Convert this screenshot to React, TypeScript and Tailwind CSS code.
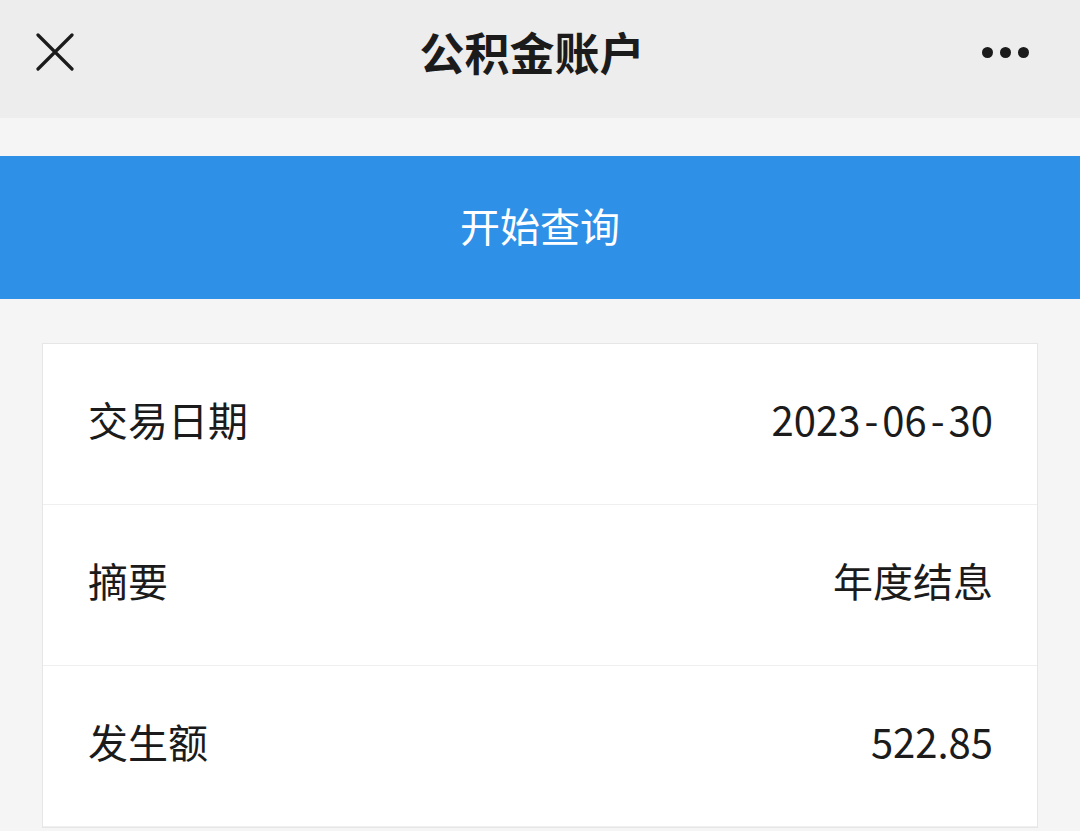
import React from 'react';

const rows = [
  { label: '交易日期', value: '2023-06-30' },
  { label: '摘要', value: '年度结息' },
  { label: '发生额', value: '522.85' },
];

// the hyphens in the date are drawn wider than the font's own
const renderValue = (v: string) =>
  v.split('-').map((part, i) => (
    <React.Fragment key={i}>
      {i > 0 && <span className="px-[4px]">-</span>}
      {part}
    </React.Fragment>
  ));

const App = () => {
  return (
    <div
      className="w-[1080px] h-[831px] overflow-hidden bg-[#f5f5f5] text-[#1b1b1b]"
      style={{ fontFamily: '"Noto Sans CJK SC", "Noto Sans", sans-serif' }}
    >
      {/* header */}
      <div className="h-[118px] bg-[#ededed] flex items-center justify-between px-[36px] relative">
        <svg width="38" height="38" viewBox="0 0 38 38" className="-mt-[14px]">
          <path d="M2 2 L36 36 M36 2 L2 36" stroke="#1b1b1b" strokeWidth="3.2" strokeLinecap="round" />
        </svg>
        <h1 className="absolute left-[532px] -translate-x-1/2 top-[21px] text-[45px] font-bold leading-[62px]">
          公积金账户
        </h1>
        <div className="flex gap-[7px] -mt-[14px] mr-[15px]">
          <span className="w-[11px] h-[11px] rounded-full bg-[#1b1b1b]" />
          <span className="w-[11px] h-[11px] rounded-full bg-[#1b1b1b]" />
          <span className="w-[11px] h-[11px] rounded-full bg-[#1b1b1b]" />
        </div>
      </div>

      <div className="h-[38px]" />

      <button className="w-full h-[143px] bg-[#2f90e7] text-white text-[40px] flex items-center justify-center pb-[6px]">
        开始查询
      </button>

      <div className="h-[44px]" />

      <div className="mx-[42px] bg-white border border-[#e6e6e6]">
        {rows.map((r) => (
          <div
            key={r.label}
            className="h-[161px] flex items-center justify-between pl-[45px] pr-[44px] pb-[10px] border-b border-[#efefef] text-[40px]"
          >
            <span>{r.label}</span>
            <span>{renderValue(r.value)}</span>
          </div>
        ))}
      </div>
    </div>
  );
};

export default App;
